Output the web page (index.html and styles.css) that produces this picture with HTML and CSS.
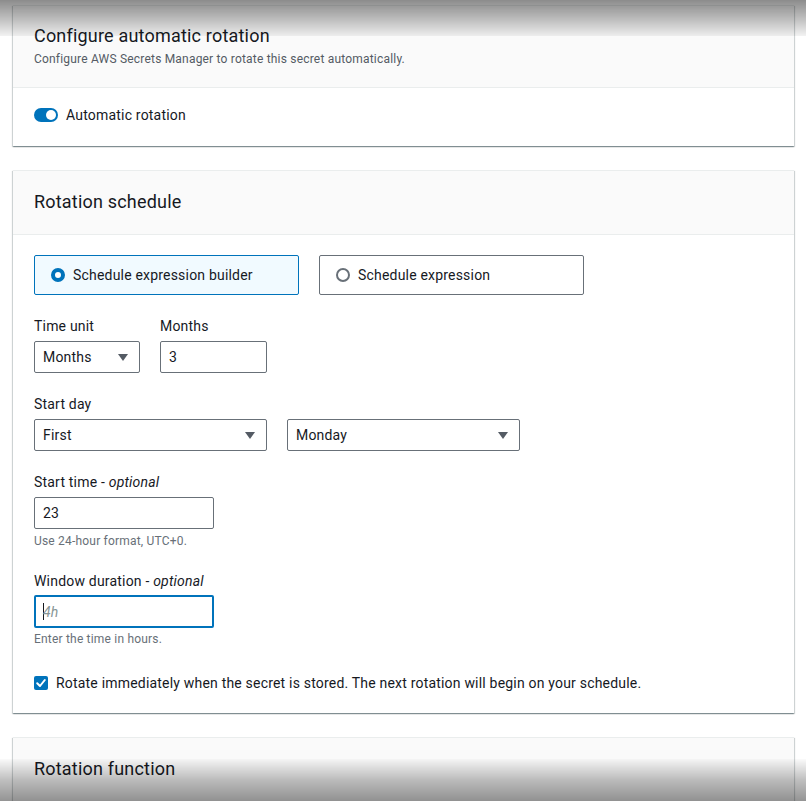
FILE: index.html
```html
<!DOCTYPE html>
<html lang="en">
<head>
<meta charset="utf-8">
<title>Configure automatic rotation</title>
<link rel="stylesheet" href="styles.css">
</head>
<body>
<div class="page">
  <section class="card">
    <div class="card-header">
      <h2 class="card-title">Configure automatic rotation</h2>
      <p class="card-desc">Configure AWS Secrets Manager to rotate this secret automatically.</p>
    </div>
    <div class="card-body toggle-body">
      <label class="toggle-row">
        <span class="toggle"><span class="knob"></span></span>
        <span>Automatic rotation</span>
      </label>
    </div>
  </section>

  <section class="card">
    <div class="card-header plain">
      <h2 class="card-title">Rotation schedule</h2>
    </div>
    <div class="card-body schedule">
      <div class="tiles">
        <div class="tile selected"><span class="radio on"></span>Schedule expression builder</div>
        <div class="tile"><span class="radio"></span>Schedule expression</div>
      </div>

      <div class="row">
        <div class="field">
          <div class="label">Time unit</div>
          <div class="select w106">Months<span class="caret"></span></div>
        </div>
        <div class="field">
          <div class="label">Months</div>
          <div class="input w107">3</div>
        </div>
      </div>

      <div class="field">
        <div class="label">Start day</div>
        <div class="row">
          <div class="select w233">First<span class="caret"></span></div>
          <div class="select w233">Monday<span class="caret"></span></div>
        </div>
      </div>

      <div class="field">
        <div class="label">Start time - <i>optional</i></div>
        <div class="input w180">23</div>
        <div class="hint first">Use 24-hour format, UTC+0.</div>
      </div>

      <div class="field">
        <div class="label">Window duration - <i>optional</i></div>
        <div class="input w180 focus"><span class="cursor"></span><span class="placeholder">4h</span></div>
        <div class="hint">Enter the time in hours.</div>
      </div>

      <label class="check-row">
        <span class="checkbox"><svg viewBox="0 0 14 14" width="14" height="14"><path d="M3.2 7.2 L6 10 L10.8 4" fill="none" stroke="#fff" stroke-width="2" stroke-linecap="round" stroke-linejoin="round"/></svg></span>
        <span>Rotate immediately when the secret is stored. The next rotation will begin on your schedule.</span>
      </label>
    </div>
  </section>

  <section class="card">
    <div class="card-header plain">
      <h2 class="card-title">Rotation function</h2>
    </div>
  </section>
</div>
<div class="shade-top"></div>
<div class="shade-bottom"></div>
</body>
</html>
```

FILE: styles.css
```css
* { box-sizing: border-box; }
html, body { margin: 0; padding: 0; background: #fff; }
body {
  font-family: Roboto, "Liberation Sans", Arial, sans-serif;
  font-size: 14px;
  line-height: 22px;
  letter-spacing: 0.014em;
  color: #16191f;
  height: 801px;
  overflow: hidden;
}
.page {
  padding: 5px 12px 0 13px;
  display: flex;
  flex-direction: column;
  gap: 24px;
}
.card {
  background: #fff;
  border-top: 1px solid #eaeded;
  box-shadow: 0 1px 1px 0 rgba(0,28,36,.3), 1px 1px 1px 0 rgba(0,28,36,.15), -1px 1px 1px 0 rgba(0,28,36,.15);
}
.card-header {
  background: #fafafa;
  border-bottom: 1px solid #eaeded;
  padding: 19px 21px 20px;
}
.card-header.plain { padding: 20px 21px 21px; }
.card-title {
  margin: 0;
  font-size: 18px;
  font-weight: 400;
  line-height: 22px;
  color: #16191f;
}
.card-desc {
  margin: 4px 0 0;
  font-size: 12px;
  line-height: 16px;
  color: #545b64;
}
.card-body { padding: 20px 21px; }
.toggle-body { padding: 16px 21px 20px; }
.toggle-row { display: flex; align-items: center; gap: 8px; }
.toggle {
  width: 24px; height: 14px;
  border-radius: 7px;
  background: #0073bb;
  position: relative;
  display: inline-block;
}
.knob {
  position: absolute;
  right: 2px; top: 2px;
  width: 10px; height: 10px;
  border-radius: 50%;
  background: #fff;
}
.schedule { display: flex; flex-direction: column; gap: 20px; padding: 20px 21px 19px; }
.tiles { display: flex; gap: 20px; }
.tile {
  width: 265px; height: 40px;
  border: 1px solid #687078;
  border-radius: 2px;
  display: flex; align-items: center;
  padding-left: 16px;
  gap: 8px;
}
.tile.selected { background: #f1faff; border-color: #0073bb; }
.radio {
  width: 14px; height: 14px;
  border-radius: 50%;
  border: 2px solid #687078;
  background: #fff;
  flex: none;
}
.radio.on { border: 4.5px solid #0073bb; }
.row { display: flex; gap: 20px; }
.field { display: flex; flex-direction: column; }
.label { margin-bottom: 4px; }
.label i { font-style: italic; }
.select, .input {
  height: 32px;
  border: 1px solid #687078;
  border-radius: 2px;
  padding: 0 9px 0 8px;
  display: flex; align-items: center;
  background: #fff;
  position: relative;
}
.select { justify-content: space-between; padding-right: 11px; }
.caret {
  width: 0; height: 0;
  border-left: 5px solid transparent;
  border-right: 5px solid transparent;
  border-top: 7px solid #545b64;
}
.w106 { width: 106px; }
.w107 { width: 107px; }
.w233 { width: 233px; }
.w180 { width: 180px; }
.input.focus { border: 2px solid #0073bb; padding-left: 7px; height: 33px; margin-top: -1px; }
.cursor { width: 1px; height: 17px; background: #16191f; margin-right: -1px; }
.placeholder { color: #879596; font-style: italic; }
.hint { font-size: 12px; line-height: 16px; color: #687078; margin-top: 3px; }
.hint.first { margin-top: 4px; margin-bottom: 1px; }
.check-row { display: flex; align-items: center; gap: 8px; margin-top: 5px; }
.checkbox {
  width: 14px; height: 14px;
  border-radius: 2px;
  background: #0073bb;
  display: inline-flex;
}
.shade-top {
  position: fixed; left: 0; right: 0; top: 0; height: 36px;
  background: linear-gradient(to bottom, rgba(0,0,0,.45), rgba(0,0,0,.22) 60%, rgba(0,0,0,.05));
  pointer-events: none;
}
.shade-bottom {
  position: fixed; left: 0; right: 0; bottom: 0; height: 42px;
  background: linear-gradient(to bottom, rgba(0,0,0,.02), rgba(0,0,0,.25) 50%, rgba(0,0,0,.42));
  pointer-events: none;
}
```
